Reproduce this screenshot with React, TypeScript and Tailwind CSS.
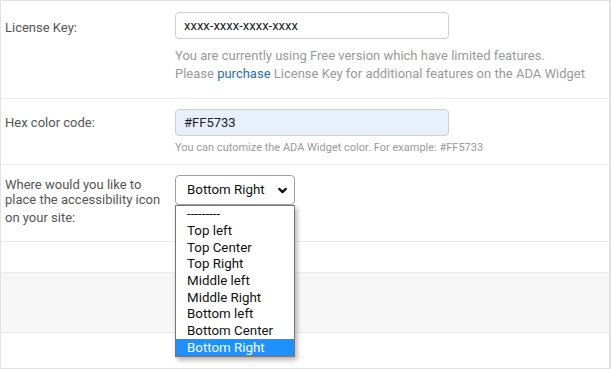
import { ChevronDown } from "lucide-react";

const OPTIONS = [
  "---------",
  "Top left",
  "Top Center",
  "Top Right",
  "Middle left",
  "Middle Right",
  "Bottom left",
  "Bottom Center",
  "Bottom Right",
];

export default function App() {
  const selected = "Bottom Right";

  return (
    <div className="w-[611px] h-[369px] bg-white font-['Roboto',sans-serif] relative">
      <div className="border border-[#e2e2e2] border-r-2 h-[369px] flex flex-col">
        {/* license key */}
        <div className="h-[98px] border-b border-[#ebebeb] flex shrink-0">
          <div className="w-[174px] pl-[4px] pt-[18px] text-[13px] leading-[18px] text-[#555]">License Key:</div>
          <div className="pt-[11px]">
            <div className="w-[274px] h-[27px] border border-[#cfcfcf] rounded-[4px] flex items-center pl-[8px] text-[13px] text-[#222]">
              xxxx-xxxx-xxxx-xxxx
            </div>
            <p className="mt-[8px] text-[13px] leading-[18px] text-[#9a9a9a] whitespace-nowrap">
              You are currently using Free version which have limited features.
              <br />
              Please <a className="text-[#2c6fa5]">purchase</a> License Key for additional features on the ADA Widget
            </p>
          </div>
        </div>

        {/* hex colour */}
        <div className="h-[66px] border-b border-[#ebebeb] flex shrink-0">
          <div className="w-[174px] pl-[4px] pt-[15px] text-[13px] leading-[18px] text-[#555]">Hex color code:</div>
          <div className="pt-[10px]">
            <div className="w-[274px] h-[27px] border border-[#cfcfcf] rounded-[4px] bg-[#e8f0fe] flex items-center pl-[8px] text-[13px] text-[#222]">
              #FF5733
            </div>
            <p className="mt-[5px] text-[11px] leading-[14px] text-[#9a9a9a] whitespace-nowrap">
              You can cutomize the ADA Widget color. For example: #FF5733
            </p>
          </div>
        </div>

        {/* position */}
        <div className="h-[77px] border-b border-[#ebebeb] flex shrink-0">
          <div className="w-[174px] pl-[4px] pt-[12px] text-[13px] leading-[15px] text-[#555]">
            <span className="block">Where would you like to</span>
            <span className="block">place the accessibility icon</span>
            <span className="block mt-[3px]">on your site:</span>
          </div>
          <div className="pt-[10px]">
            <div className="w-[120px] h-[30px] border border-[#a0a0a0] rounded-[4px] flex items-center justify-between pl-[11px] pr-[5px] text-[13.33px] text-[#111]">
              <span>{selected}</span>
              <ChevronDown className="w-[13px] h-[13px]" strokeWidth={4} />
            </div>
          </div>
        </div>

        <div className="h-[31px] border-b border-[#ebebeb] shrink-0" />
        <div className="h-[60px] border-b border-[#ebebeb] bg-[#f7f7f7] shrink-0" />
        <div className="flex-1" />
      </div>

      {/* open option list */}
      <div className="absolute left-[175px] top-[205px] w-[120px] border border-[#777] bg-white shadow-[2px_3px_5px_rgba(0,0,0,0.3)]">
        {OPTIONS.map((o) => (
          <div
            key={o}
            className={
              o === selected
                ? "h-[16.67px] flex items-center pl-[11px] text-[13.33px] bg-[#1e90ff] text-white"
                : "h-[16.67px] flex items-center pl-[11px] text-[13.33px] text-[#111]"
            }
          >
            {o}
          </div>
        ))}
      </div>
    </div>
  );
}
